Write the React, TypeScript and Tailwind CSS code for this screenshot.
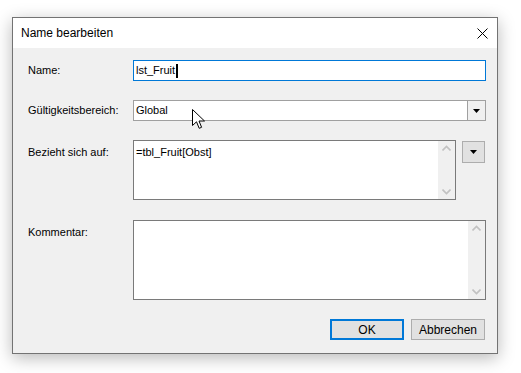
import React from "react";

const Tri = () => (
  <svg width="7" height="4" viewBox="0 0 7 4"><path d="M0 0H7L3.5 4Z" fill="#000" /></svg>
);

const Scroll = ({ h }: { h: string }) => (
  <div className={`flex flex-col justify-between w-[17px] ${h} bg-[#f0f0f0] py-[4px] items-center`}>
    <svg width="9" height="6" viewBox="0 0 9 6"><path d="M0.5 5.5L4.5 1.5L8.5 5.5" stroke="#c2c2c2" strokeWidth="1.6" fill="none" /></svg>
    <svg width="9" height="6" viewBox="0 0 9 6"><path d="M0.5 0.5L4.5 4.5L8.5 0.5" stroke="#c2c2c2" strokeWidth="1.6" fill="none" /></svg>
  </div>
);

export default function App() {
  const font = { fontFamily: '"Liberation Sans", Arial, sans-serif' };
  return (
    <div className="relative w-[521px] h-[373px] bg-white pt-[17px] pl-[12px]" style={font}>
      <div className="w-[486px] h-[337px] border border-[#737373] bg-[#f0f0f0] shadow-[0_4px_16px_rgba(0,0,0,0.28)] flex flex-col">
        <div className="h-[30px] bg-white flex items-center justify-between pl-[8px] pr-[9px] shrink-0">
          <span className="text-[12px] text-black">Name bearbeiten</span>
          <svg width="11" height="11" viewBox="0 0 11 11"><path d="M0.5 0.5L10.5 10.5M10.5 0.5L0.5 10.5" stroke="#000" strokeWidth="1" /></svg>
        </div>
        <div className="flex flex-col pt-[12px] pl-[15px] text-[11px] text-black">
          <div className="flex items-center h-[21px]">
            <div className="w-[105px]">Name:</div>
            <div className="w-[353px] h-[21px] border border-[#0078d7] bg-white flex items-center pl-[2px]">
              <span>lst_Fruit</span>
              <span className="w-[2px] h-[14px] bg-black ml-[1px]" />
            </div>
          </div>
          <div className="flex items-center h-[21px] mt-[19px]">
            <div className="w-[105px]">Gültigkeitsbereich:</div>
            <div className="w-[353px] h-[21px] border border-[#a0a0a0] bg-white flex">
              <div className="flex-1 flex items-center pl-[2px]">Global</div>
              <div className="w-[18px] border-l border-[#a0a0a0] bg-[#f0f0f0] flex items-center justify-center"><Tri /></div>
            </div>
          </div>
          <div className="flex items-start mt-[19px]">
            <div className="w-[105px] pt-[4px]">Bezieht sich auf:</div>
            <div className="w-[323px] h-[60px] border border-[#7a7a7a] bg-white flex">
              <div className="flex-1 pl-[2px] pt-[3px]">=tbl_Fruit[Obst]</div>
              <Scroll h="h-[58px]" />
            </div>
            <div className="ml-[6px] mt-[1px] w-[23px] h-[22px] border border-[#adadad] bg-[#e1e1e1] flex items-center justify-center"><Tri /></div>
          </div>
          <div className="flex items-start mt-[20px]">
            <div className="w-[105px] pt-[4px]">Kommentar:</div>
            <div className="w-[353px] h-[80px] border border-[#7a7a7a] bg-white flex">
              <div className="flex-1" />
              <Scroll h="h-[78px]" />
            </div>
          </div>
          <div className="flex justify-end mt-[19px] pr-[12px] gap-[7px]">
            <div className="w-[74px] h-[21px] border-2 border-[#0078d7] bg-[#e1e1e1] flex items-center justify-center text-[12px]">OK</div>
            <div className="w-[74px] h-[21px] border border-[#adadad] bg-[#e1e1e1] flex items-center justify-center text-[12px]">Abbrechen</div>
          </div>
        </div>
      </div>
      <svg className="absolute left-[192px] top-[109px]" width="14" height="21" viewBox="0 0 14 21">
        <path d="M0.5 0.5V16.5L4.5 12.8L7.2 19.3L9.6 18.3L7 12H12.5Z" fill="#fff" stroke="#000" strokeWidth="1" strokeLinejoin="round" />
      </svg>
    </div>
  );
}
